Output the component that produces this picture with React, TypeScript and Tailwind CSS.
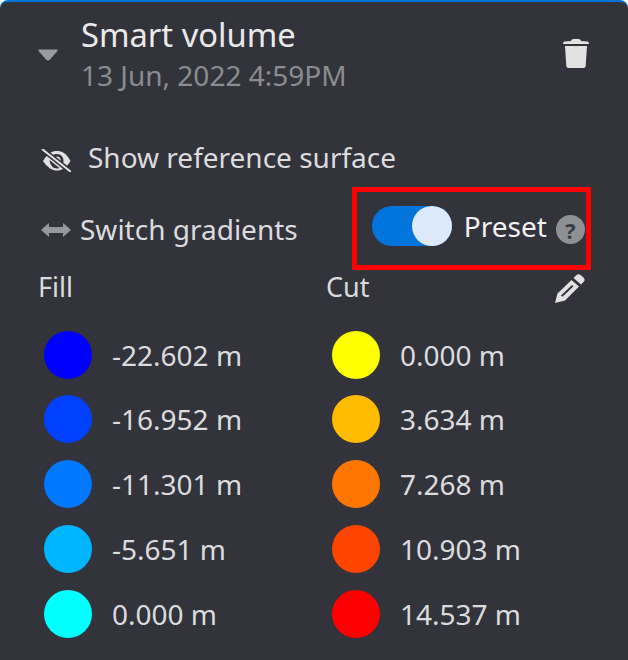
const fill = [
  ["#0000ff", "-22.602 m"],
  ["#0040ff", "-16.952 m"],
  ["#0077ff", "-11.301 m"],
  ["#00b7ff", "-5.651 m"],
  ["#00ffff", "0.000 m"],
];
const cut = [
  ["#ffff00", "0.000 m"],
  ["#ffbb00", "3.634 m"],
  ["#ff7700", "7.268 m"],
  ["#ff4400", "10.903 m"],
  ["#ff0000", "14.537 m"],
];

function Legend({ items, className }: { items: string[][]; className: string }) {
  return (
    <div className={`flex flex-col gap-[16.750px] ${className}`}>
      {items.map(([color, label]) => (
        <div key={color} className="flex h-[48px] items-center gap-[20px]">
          <span className="h-[48px] w-[48px] rounded-full" style={{ backgroundColor: color }} />
          <span className="text-[28px] leading-[48px] text-[#dcdcde]">{label}</span>
        </div>
      ))}
    </div>
  );
}

export default function App() {
  return (
    <div className="h-[660px] w-[628px] overflow-hidden rounded-t-[8px] border-t-2 border-[#0474d8] bg-[#32333b] font-['Noto_Sans',sans-serif]">
      <div className="flex h-[94px] items-start pt-[11px]">
        <svg className="ml-[38px] mt-[36px] h-[12px] w-[20px]" viewBox="0 0 20 12">
          <path d="M0.500 0.500 H19.500 V2 L11.500 11 Q10 12 8.500 11 L0.500 2 Z" fill="#9a9b9f" />
        </svg>
        <div className="ml-[23px] flex flex-col">
          <span className="text-[32.700px] leading-[44px] text-[#eaeaec]">Smart volume</span>
          <span className="text-[28px] leading-[36px] text-[#8b8c90]">13 Jun, 2022 4:59PM</span>
        </div>
        <svg className="ml-auto mr-[39px] mt-[26px] h-[29px] w-[26px]" viewBox="0 0 26 29">
          <path d="M8 2 C8.500 0.500 9.500 0 11 0 H15 C16.500 0 17.500 0.500 18 2 L24.500 2.500 C25.500 2.800 26 3.800 26 5 H0 C0 3.800 0.500 2.800 1.500 2.500 Z" fill="#e2e2e3" />
          <path d="M2 7 H24 L22.700 27 C22.600 28.300 21.700 29 20.500 29 H5.500 C4.300 29 3.400 28.300 3.300 27 Z" fill="#e2e2e3" />
        </svg>
      </div>

      <div className="mt-[31px] flex h-[60px] items-center pl-[41px]">
        <svg className="mt-[7px] h-[23px] w-[30px]" viewBox="0 0 30 23">
          <path d="M2 12 C7 4 11 2 16 2 C21 2 25 4 29.500 12 C25 19 21 21.500 16 21.500 C11 21.500 7 19 2 12 Z" fill="#e2e2e3" />
          <path d="M11 7.500 C12.500 5.500 14 5 16 5 C20 5 22.500 8 22.500 11.500 C22.500 13.500 22 14.500 21 16 L19 14 C19.500 13 19.800 12.500 19.800 11.500 C19.800 9 18 7.500 16 7.500 C15 7.500 14.300 7.800 13.500 8.500 Z" fill="#32333b" />
          <path d="M8.500 11 L18.500 19 C17.500 19.500 16.800 19.500 16 19.500 C12 19.500 9 16 8.500 11 Z" fill="#32333b" />
          <path d="M1 0 L30 23" stroke="#32333b" strokeWidth="5" />
          <path d="M1 0 L30 23" stroke="#e2e2e3" strokeWidth="2" />
        </svg>
        <span className="ml-[17px] text-[28px] leading-[40px] text-[#dcdcde]">Show reference surface</span>
      </div>

      <div className="flex items-start pl-[41px]">
        <div className="mt-[12px] flex h-[60px] items-center">
          <svg className="mt-[2px] h-[14px] w-[30px]" viewBox="0 0 30 14">
            <path d="M0 7 L8 0 V4 H22 V0 L30 7 L22 14 V10 H8 V14 Z" fill="#97989c" />
          </svg>
          <span className="ml-[9px] text-[28px] leading-[40px] text-[#dcdcde]">Switch gradients</span>
        </div>
        <div className="ml-[54px] flex h-[83px] w-[239px] items-center border-[5.500px] border-[#ff0000] pl-[15px]">
          <span className="mb-[5px] flex h-[40px] w-[80px] justify-end rounded-full bg-[#0275dd]">
            <span className="h-[40px] w-[40px] rounded-full bg-[#dce9fb]" />
          </span>
          <span className="mb-[5px] ml-[12px] text-[28px] leading-[40px] text-[#f2f2f4]">Preset</span>
          <span className="ml-[9px] mt-[2px] flex h-[29px] w-[29px] items-center justify-center rounded-full bg-[#8f9094] text-[22px] font-bold leading-none text-[#3a3b42]">?</span>
        </div>
      </div>

      <div className="mt-[-2px] flex h-[38px] items-center pl-[38px]">
        <span className="w-[288px] text-[27px] leading-[38px] text-[#dcdcde]">Fill</span>
        <span className="text-[27px] leading-[38px] text-[#dcdcde]">Cut</span>
        <svg className="ml-auto mr-[43px] mt-[3px] h-[29px] w-[31px]" viewBox="0 0 31 29">
          <path d="M22 1.500 C23.500 0 25 0 26.500 1 L29.500 3.500 C31 5 31 6.500 29.500 8 L27 10.500 L19.500 4 Z" fill="#e2e2e3" />
          <path fillRule="evenodd" d="M17.500 6 L25 12.500 L11 26.500 L1 29 L3.500 19.500 Z M18 11 L7 21.500 L8.500 22.800 L19.500 12.300 Z" fill="#e2e2e3" />
          <path d="M3.500 21 L8.500 25.500 L2 27.500 Z" fill="#e2e2e3" />
        </svg>
      </div>

      <div className="mt-[24.600px] flex">
        <Legend items={fill} className="ml-[44px] w-[288px]" />
        <Legend items={cut} className="" />
      </div>
    </div>
  );
}
